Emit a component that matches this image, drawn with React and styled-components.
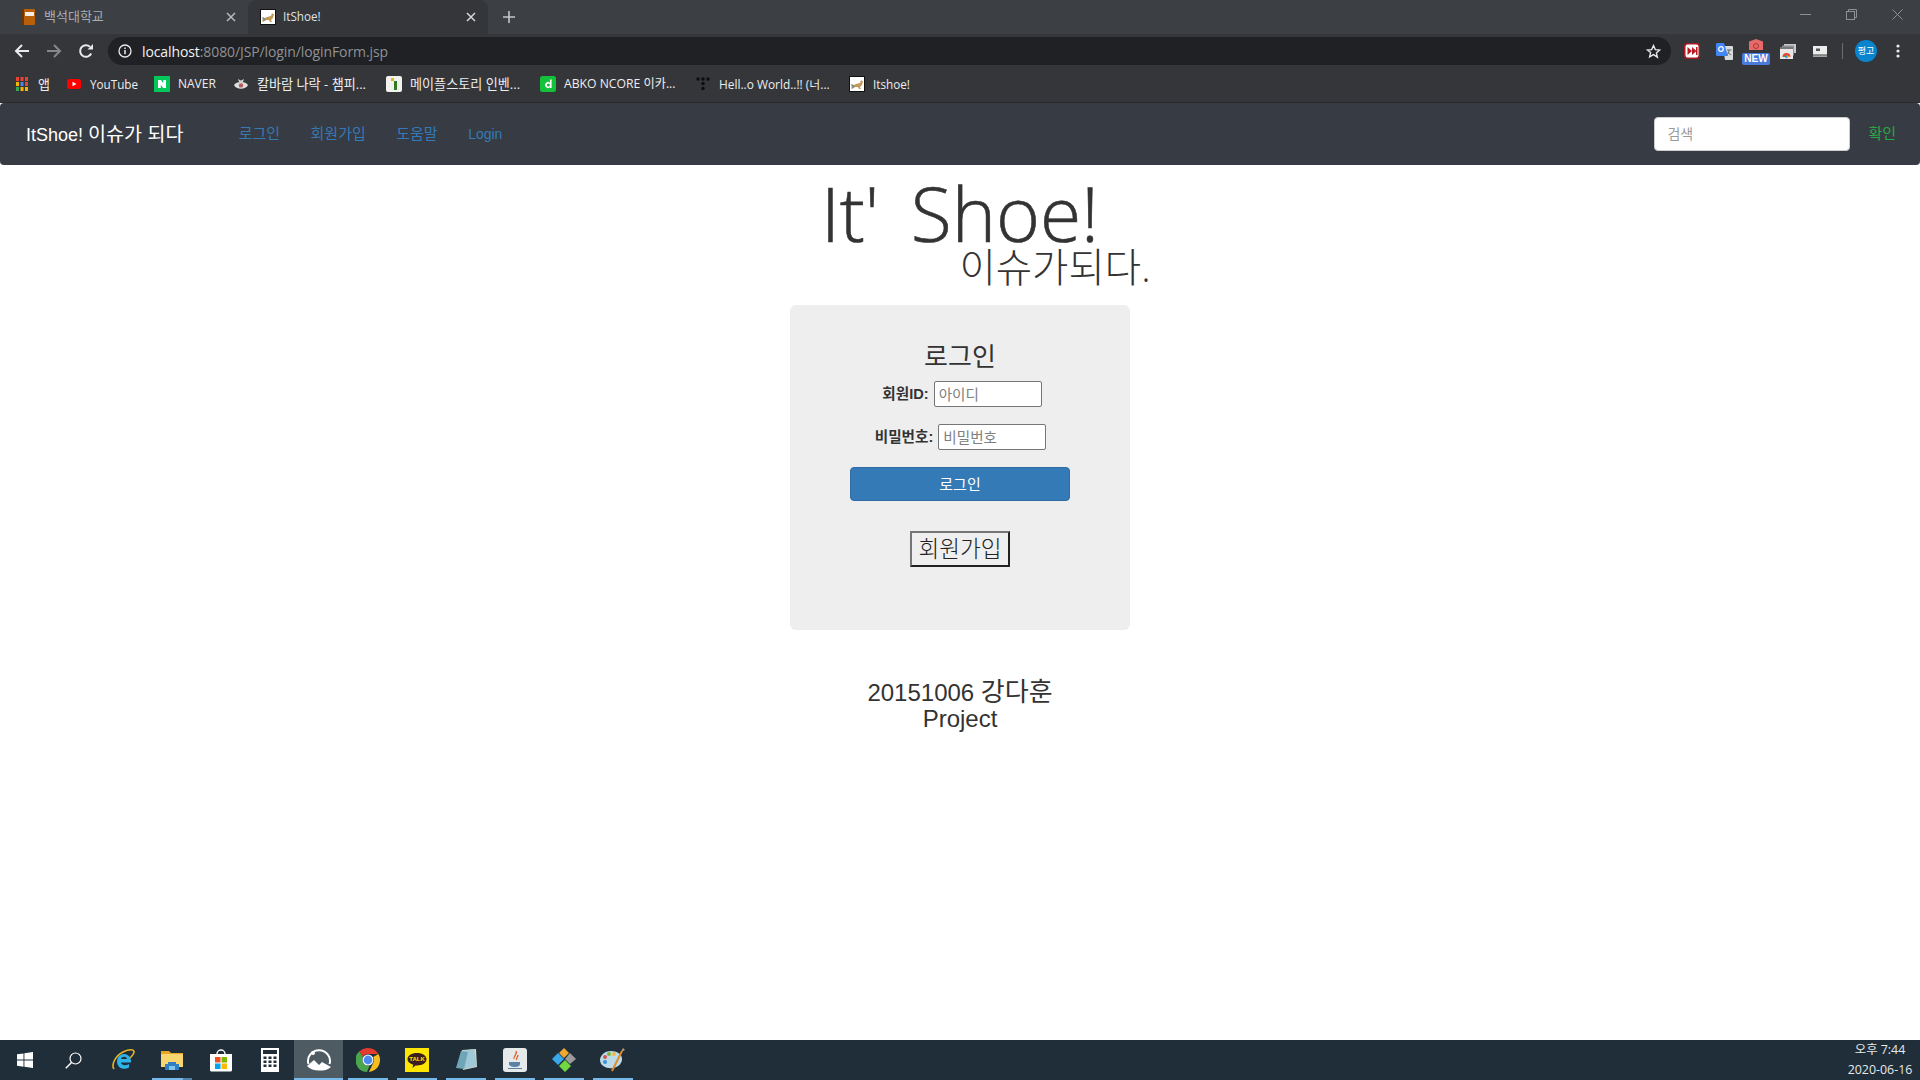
import React from "react";
import styled, { createGlobalStyle } from "styled-components";

const KR = '"Noto Sans CJK KR"';
const Global = createGlobalStyle`
  html, body { margin: 0; padding: 0; background: #fff; }
  body { font-family: "Liberation Sans", ${KR}, sans-serif; overflow: hidden; }
  * { box-sizing: border-box; }
`;

const Screen = styled.div`
  width: 1920px; height: 1080px; display: flex; flex-direction: column; overflow: hidden;
`;
const Chrome = styled.header`
  flex: none; height: 103px; display: flex; flex-direction: column;
  font-family: "Open Sans", ${KR}, sans-serif; color: #e8eaed;
`;
const TabStrip = styled.div`
  height: 34px; background: #3c4045; display: flex; padding-left: 8px; align-items: stretch;
`;
const Tab = styled.div`
  width: 240px; display: flex; align-items: center; padding: 0 12px; gap: 8px;
  border-radius: 8px 8px 0 0;
  background: ${p => (p.$active ? "#35363a" : "transparent")};
  color: ${p => (p.$active ? "#dfe1e5" : "#a9adb2")};
`;
const TabTitle = styled.span`
  flex: 1; white-space: nowrap; font-size: ${p => p.$size}px; line-height: 16px; padding-bottom: 2px; margin-left: ${p => p.$nudge || 0}px;
`;
const NewTab = styled.div`
  width: 42px; display: flex; align-items: center; justify-content: center;
`;
const WindowControls = styled.div`
  margin-left: auto; display: flex; align-items: center; padding-bottom: 6px;
`;
const WindowButton = styled.div`
  width: 46px; display: flex; justify-content: center;
`;
const Toolbar = styled.div`
  height: 34px; background: #35363a; display: flex; align-items: center; padding-left: 6px;
`;
const NavButton = styled.div`
  width: 32px; display: flex; justify-content: center; align-items: center;
`;
const UrlBar = styled.div`
  flex: 1; height: 28px; margin-left: 6px; background: #202124; border-radius: 14px;
  display: flex; align-items: center; padding: 0 10px; gap: 10px; font-size: 14px;
`;
const UrlText = styled.span`
  flex: 1; color: #8f9296; letter-spacing: -0.1px; line-height: 18px; padding-top: 1px;
`;
const UrlHost = styled.span`
  color: #f1f3f4;
`;
const Extensions = styled.div`
  width: 249px; display: flex; align-items: center; padding-left: 5px;
`;
const Extension = styled.div`
  width: 32px; height: 28px; display: flex; justify-content: center; align-items: center; position: relative;
`;
const NewBadge = styled.span`
  position: absolute; left: 2px; bottom: 0; width: 28px; height: 12px; border-radius: 2px;
  background: #4a7bdc; color: #fff; font: bold 10px/12px "Liberation Sans", sans-serif; text-align: center;
`;
const Separator = styled.div`
  width: 1px; height: 16px; background: #6a6c70; margin: 0 12px 0 6px;
`;
const Avatar = styled.div`
  width: 22px; height: 22px; border-radius: 50%; background: #0a84ce; color: #fff; font-size: 9px;
  line-height: 22px; text-align: center; font-family: ${KR}, sans-serif;
`;
const MenuDots = styled.div`
  width: 32px; display: flex; justify-content: center; margin-left: 5px;
`;
const Bookmarks = styled.div`
  height: 34px; background: #35363a; display: flex; align-items: center; padding: 0 0 3px 14px; color: #eceef0;
`;
const Bookmark = styled.div`
  width: ${p => p.$w}px; display: flex; align-items: center; gap: 8px; white-space: nowrap;
`;
const BookmarkLabel = styled.span`
  font-size: ${p => p.$size}px; line-height: 16px;
`;
const ChromeEdge = styled.div`
  height: 1px; background: #29292c;
`;

const Page = styled.main`
  flex: 1; background: #fff; display: flex; flex-direction: column; min-height: 0;
`;
const Navbar = styled.nav`
  flex: none; height: 62px; background: #373b43; border-radius: 4px; display: flex; align-items: center;
  padding: 0 24px 0 26px;
`;
const Brand = styled.a`
  color: #fff; font-size: 18px; line-height: 22px; margin-right: 55px; white-space: nowrap; font-family: "Liberation Sans", ${KR}, sans-serif;
`;
const BrandKorean = styled.span`
  font-size: 19.6px;
`;
const NavLinks = styled.div`
  display: flex; gap: 30.5px; flex: 1; align-items: baseline;
`;
const NavLink = styled.a`
  color: #337ab7; font-size: ${p => p.$size || 15}px; line-height: 20px;
`;
const SearchInput = styled.input`
  width: 196px; height: 34px; border: 1px solid #ccc; border-radius: 4px; padding: 6px 12px; font-size: 14px;
  font-family: "Liberation Sans", ${KR}, sans-serif;
  background: #fff; &::placeholder { color: #999; opacity: 1; }
`;
const Confirm = styled.span`
  color: #28a745; margin-left: 18px; font-size: 15px; line-height: 20px;
`;
const Title = styled.h1`
  margin: 12px 0 0; font-size: 75px; line-height: 72px; font-weight: 300; color: #333; text-align: center; word-spacing: 12px;
  font-family: "Open Sans", ${KR}, sans-serif; -webkit-text-stroke: 0.6px #333;
`;
const Subtitle = styled.h2`
  margin: 0; padding-left: 190px; font-size: 39.5px; line-height: 36px; font-weight: 300; color: #333; text-align: center;
  font-family: "Open Sans", ${KR}, sans-serif;
`;
const Panel = styled.section`
  width: 340px; height: 325px; margin: 20px auto 0; background: #eee; border-radius: 6px;
  padding-top: 39px; display: flex; flex-direction: column; align-items: center;
`;
const PanelTitle = styled.h3`
  margin: 0 0 11px; font-size: 26px; line-height: 26px; font-weight: 400; color: #333;
`;
const FieldRow = styled.div`
  display: flex; align-items: center; gap: 5px; height: 26px; margin-bottom: 17px; margin-left: ${p => p.$shift}px;
`;
const FieldLabel = styled.label`
  font-size: 14.6px; font-weight: 700; color: #333; line-height: 20px; padding-left: 1px;
`;
const FieldInput = styled.input`
  width: 108px; height: 26px; border: 1px solid #767676; border-radius: 2px; padding: 1px 4px 3px; background: #fff;
  font-size: 14.6px; font-family: ${KR}, sans-serif; &::placeholder { color: #808080; opacity: 1; }
`;
const SubmitButton = styled.button`
  width: 220px; height: 34px; background: #337ab7; border: 1px solid #2e6da4; border-radius: 4px; color: #fff;
  font-size: 15px; font-family: inherit; padding: 0 0 2px;
`;
const SignupButton = styled.button`
  width: 100px; height: 36px; margin-top: 30px; background: #efefef; border: 2px solid; border-color: #767676 #222 #222 #767676;
  font-size: 22.6px; font-weight: 300; line-height: 28px; color: #222; font-family: ${KR}, sans-serif; padding: 0 0 3px;
`;
const Credits = styled.div`
  margin-top: 49px; text-align: center; font-size: 24px; line-height: 26px; color: #333;
`;
const CreditName = styled.span`
  font-size: 26px;
`;

const Taskbar = styled.footer`
  flex: none; height: 40px; background: #1f2e38; display: flex; align-items: stretch; position: relative;
`;
const TaskCell = styled.div`
  width: 49px; display: flex; align-items: center; justify-content: center; position: relative;
  background: ${p => (p.$active ? "#4e5b63" : "transparent")};
  &::after {
    content: ""; position: absolute; bottom: 0; height: 2px; background: #76b9ed;
    left: ${p => (p.$active ? "0" : "4.5px")}; right: ${p => (p.$active ? "0" : "4.5px")};
    display: ${p => (p.$running || p.$active ? "block" : "none")};
  }
  &::before {
    content: ""; position: absolute; bottom: 0; height: 2px; width: 9px; right: 4.5px; z-index: 1; background: #4f83ac;
    display: ${p => (p.$stacked ? "block" : "none")};
  }
`;
const Clock = styled.div`
  margin-left: auto; width: 80px; margin-right: 0; text-align: center; color: #e6e9eb; font-size: 12.4px; line-height: 19.5px;
  font-family: "Open Sans", ${KR}, sans-serif;
`;

const Cat = () => (
  <svg width="16" height="16" viewBox="0 0 16 16">
    <rect x=".5" y=".5" width="15" height="15" fill="#fff" stroke="#111" />
    <path d="M2 12l3-3 2-1 4-1 1-3 1 1 1 0-1 4-2 2 1 2-2 0-1-2-3 0-3 2z" fill="#c49a56" />
    <path d="M2 8l3 1 1 2-3 1z" fill="#8a8f80" />
  </svg>
);
const BookIcon = () => (
  <svg width="16" height="16" viewBox="0 0 16 16">
    <rect x="1" y="0" width="14" height="16" rx="1" fill="#b85f0a" />
    <rect x="1" y="0" width="3" height="16" fill="#6d3606" />
    <rect x="5" y="3" width="9" height="4" fill="#f4efe4" />
  </svg>
);
const Close = ({ c = "#b8babd", s = 10 }) => (
  <svg width={s} height={s} viewBox="0 0 10 10"><path d="M1 1l8 8M9 1l-8 8" stroke={c} strokeWidth="1.5" /></svg>
);
const Arrow = ({ c, flip }) => (
  <svg width="16" height="16" viewBox="0 0 16 16" style={flip ? { transform: "scaleX(-1)" } : undefined}>
    <path d="M15 8H2M8 2L2 8l6 6" fill="none" stroke={c} strokeWidth="2" />
  </svg>
);
const Reload = () => (
  <svg width="16" height="16" viewBox="0 0 16 16">
    <path d="M13.2 10.5A5.8 5.8 0 1 1 12 3.9" fill="none" stroke="#e8eaed" strokeWidth="2" />
    <path d="M9.5 6.5H15V1z" fill="#e8eaed" />
  </svg>
);
const Info = () => (
  <svg width="14" height="14" viewBox="0 0 14 14">
    <circle cx="7" cy="7" r="6" fill="none" stroke="#e8eaed" strokeWidth="1.3" />
    <path d="M7 6v4.2M7 3.5v1.5" stroke="#e8eaed" strokeWidth="1.5" />
  </svg>
);
const Star = () => (
  <svg width="15" height="15" viewBox="0 0 24 24">
    <path d="M12 2.5l2.9 6.4 7 .7-5.3 4.6 1.6 6.900L12 17l-6.200 3.600 1.600-6.900L2.100 9.600l7-.7z" fill="none" stroke="#e8eaed" strokeWidth="2.2" />
  </svg>
);
const Apps = () => (
  <svg width="16" height="16" viewBox="0 0 16 16">
    {[["#e94335", "#e94335", "#e94335"], ["#f4b400", "#4285f4", "#e94335"], ["#34a853", "#f4b400", "#f4b400"]].map((row, y) =>
      row.map((c, x) => <rect key={`${x}${y}`} x={2 + x * 4.5} y={1 + y * 5} width="3" height="4" fill={c} />)
    )}
  </svg>
);
const YouTube = () => (
  <svg width="16" height="16" viewBox="0 0 16 16">
    <rect x="1" y="3" width="14" height="10" rx="2.5" fill="#f00" />
    <path d="M6.500 5.700v4.600L10.400 8z" fill="#fff" />
  </svg>
);
const Naver = () => (
  <svg width="16" height="16" viewBox="0 0 16 16">
    <rect width="16" height="16" fill="#03c75a" />
    <path d="M4 4h3l2.200 3.300V4H12v8H9L6.800 8.700V12H4z" fill="#fff" />
  </svg>
);
const Eye = () => (
  <svg width="16" height="16" viewBox="0 0 16 16">
    <path d="M1 9c2-4 12-4 14 0-2 5-12 5-14 0z" fill="#dfdfdf" />
    <path d="M5 3l1 3h4l1-3-3 1.500z" fill="#cfcfcf" />
    <circle cx="8" cy="9.400" r="2.200" fill="#b85a5a" />
  </svg>
);
const Maple = () => (
  <svg width="16" height="16" viewBox="0 0 16 16">
    <rect width="16" height="16" rx="2" fill="#f2f2ee" />
    <rect x="5" y="2" width="3" height="3" fill="#e8b420" />
    <rect x="8" y="5" width="3" height="9" fill="#2f7d20" />
  </svg>
);
const DIcon = () => (
  <svg width="16" height="16" viewBox="0 0 16 16">
    <rect width="16" height="16" rx="2.500" fill="#13c13a" />
    <path d="M10 3.500h1.600V12H10v-.7a3 3 0 1 1 0-4.600zM8.400 7.600a1.500 1.500 0 1 0 0 3 1.500 1.500 0 0 0 0-3z" fill="#fff" fillRule="evenodd" />
  </svg>
);
const TDots = () => (
  <svg width="16" height="16" viewBox="0 0 16 16" fill="#0d0d0d">
    {[[3, 3], [8, 3], [13, 3], [8, 7.5], [8, 12.5]].map(([x, y]) => <circle key={`${x}${y}`} cx={x} cy={y} r="1.7" />)}
  </svg>
);
const RedExt = () => (
  <svg width="16" height="16" viewBox="0 0 16 16">
    <rect x=".7" y=".7" width="14.600" height="14.600" rx="3" fill="#fff" stroke="#a81b22" strokeWidth="1.600" />
    <path d="M3.500 4v8L8 8zM8 4v8l4.500-4z" fill="#b71c24" />
    <rect x="12" y="4" width="1.500" height="8" fill="#b71c24" />
  </svg>
);
const Translate = () => (
  <svg width="17" height="17" viewBox="0 0 17 17">
    <path d="M7 3h9a1 1 0 0 1 1 1v12a1 1 0 0 1-1 1H9z" fill="#d8dadb" />
    <path d="M1 0h7l4 13H1a1 1 0 0 1-1-1V1a1 1 0 0 1 1-1z" fill="#4285f4" />
    <circle cx="5" cy="6" r="2.300" fill="none" stroke="#fff" strokeWidth="1.200" />
    <path d="M11 7h4.500M13 7c0 3-1 4-2.500 5M11.700 9c1 1.500 2 2.300 3.500 2.700" fill="none" stroke="#5f6368" strokeWidth="1" />
  </svg>
);
const Shield = () => (
  <svg width="16" height="18" viewBox="0 0 16 18" style={{ marginTop: -6 }}>
    <path d="M8 0l7 2.500V11H1V2.500z" fill="#e66a6a" />
    <circle cx="8" cy="7" r="2.500" fill="none" stroke="#b03535" strokeWidth="1" />
  </svg>
);
const StackChrome = () => (
  <svg width="16" height="15" viewBox="0 0 16 15">
    <rect x="4" y="0" width="12" height="9" fill="#c8c9cb" />
    <rect x="2" y="1.500" width="12" height="10" fill="#8f9296" />
    <rect x="0" y="3" width="13" height="12" fill="#e8e8e8" />
    <rect x="0" y="3" width="13" height="2" fill="#777" />
    <path d="M2.500 13a4 4 0 0 1 4-4 4 4 0 0 1 4 4z" fill="#e94335" />
    <path d="M6.500 11l4 2h-4z" fill="#fbbc05" />
    <path d="M2.500 13l4-2v2z" fill="#34a853" />
    <circle cx="6.500" cy="13" r="1.200" fill="#4285f4" />
  </svg>
);
const ScreenExt = () => (
  <svg width="14" height="11" viewBox="0 0 14 11">
    <rect width="14" height="8.500" fill="#eceded" />
    <rect x="3" y="2.500" width="4" height="2.500" fill="#555" />
    <rect y="9.300" width="14" height="1.700" fill="#a4a6a8" />
  </svg>
);
const Dots = () => (
  <svg width="4" height="14" viewBox="0 0 4 14" fill="#e8eaed">
    <circle cx="2" cy="2" r="1.600" /><circle cx="2" cy="7" r="1.600" /><circle cx="2" cy="12" r="1.600" />
  </svg>
);
const WinMin = () => <svg width="11" height="11" viewBox="0 0 11 11"><path d="M0 5.500h11" stroke="#8d9094" /></svg>;
const WinRestore = () => (
  <svg width="11" height="11" viewBox="0 0 11 11" fill="none" stroke="#8d9094">
    <rect x=".5" y="2.500" width="8" height="8" /><path d="M2.500 2.500v-2h8v8h-2" />
  </svg>
);
const WinClose = () => <svg width="11" height="11" viewBox="0 0 11 11"><path d="M.5.5l10 10M10.500.5l-10 10" stroke="#8d9094" /></svg>;
const Plus = () => <svg width="12" height="12" viewBox="0 0 12 12"><path d="M6 0v12M0 6h12" stroke="#c4c6c9" strokeWidth="1.600" /></svg>;

const WinLogo = () => (
  <svg width="16" height="16" viewBox="0 0 16 16" fill="#fff">
    <path d="M0 2.300L6.500 1.400v6.200H0zM7.400 1.300L16 0v7.600H7.400zM0 8.500h6.500v6.200L0 13.700zM7.400 8.500H16V16l-8.600-1.200z" />
  </svg>
);
const SearchGlass = () => (
  <svg width="17" height="17" viewBox="0 0 17 17" fill="none" stroke="#fff">
    <circle cx="10.500" cy="6.500" r="5.500" strokeWidth="1.200" /><path d="M6.500 10.500L.8 16.200" strokeWidth="1.500" />
  </svg>
);
const IE = () => (
  <svg width="24" height="24" viewBox="0 0 24 24">
    <path d="M3 21C0 17 4 8 12 4c6-3 11-3 11 0 0 2-2 4-4 6" fill="none" stroke="#e6b422" strokeWidth="1.600" />
    <path d="M6 13a7 7 0 0 1 14 0v1.500H10c.3 3 5 3.500 8 1.500v3.500c-5 3-12 1-12-6.500zM10 11h6c-.3-3-5.500-3-6 0z" fill="#2fb4e9" fillRule="evenodd" />
  </svg>
);
const Folder = () => (
  <svg width="22" height="20" viewBox="0 0 22 20">
    <path d="M0 1h8l2 2h12v5H0z" fill="#e4a826" />
    <rect y="4" width="22" height="13" fill="#f7d66f" />
    <path d="M4 20v-6h3v-2h8v2h3v6h-4v-4H8v4z" fill="#2f7fc4" />
    <rect x="8" y="16" width="6" height="4" fill="#7fc4ee" />
  </svg>
);
const Store = () => (
  <svg width="24" height="24" viewBox="0 0 24 24">
    <path d="M8 6a4 4 0 0 1 8 0" fill="none" stroke="#fff" strokeWidth="1.400" />
    <path d="M1 6h22v16a1.500 1.500 0 0 1-1.500 1.500h-19A1.500 1.500 0 0 1 1 22z" fill="#fff" />
    <rect x="6" y="9" width="5.500" height="5.500" fill="#f25022" />
    <rect x="12.500" y="9" width="5.500" height="5.500" fill="#7fba00" />
    <rect x="6" y="15.500" width="5.500" height="5.500" fill="#00a4ef" />
    <rect x="12.500" y="15.500" width="5.500" height="5.500" fill="#ffb900" />
  </svg>
);
const Calc = () => (
  <svg width="18" height="24" viewBox="0 0 18 24">
    <rect width="18" height="24" fill="#fff" />
    <rect x="2" y="2" width="14" height="4" fill="#1f2e38" />
    {[8.5, 12.5, 16.5].map(y => [2.5, 7.5, 12.5].map(x => <rect key={`${x}${y}`} x={x} y={y} width="3" height="2.500" fill="#1f2e38" />))}
  </svg>
);
const Photos = () => (
  <svg width="26" height="24" viewBox="0 0 26 24" fill="none" stroke="#fff" strokeWidth="2">
    <path d="M2.500 16a11 10.500 0 1 1 21 0" />
    <path d="M1 18l7-6 5 5 3-3 9 5c-3 3-7 3.500-12 3.500S4 21 1 18z" fill="#fff" stroke="none" />
    <circle cx="7" cy="5" r="2" fill="#fff" stroke="none" />
  </svg>
);
const ChromeLogo = () => (
  <svg width="24" height="24" viewBox="0 0 24 24">
    <path d="M12 0a12 12 0 0 1 10.400 6H12a6 6 0 0 0-5.200 3L3.400 3.200A12 12 0 0 1 12 0z" fill="#e33b2e" />
    <path d="M22.400 6a12 12 0 0 1-9.500 18L17.200 15a6 6 0 0 0 0-6z" fill="#f5bd1f" />
    <path d="M3.400 3.200L7 9.500a6 6 0 0 0 6.500 8.300L11 24A12 12 0 0 1 3.400 3.200z" fill="#4aa54d" />
    <circle cx="12" cy="12" r="5.500" fill="#fff" />
    <circle cx="12" cy="12" r="4.400" fill="#4d8bf0" />
  </svg>
);
const Kakao = () => (
  <svg width="24" height="24" viewBox="0 0 24 24">
    <rect width="24" height="24" fill="#ffe600" />
    <path d="M12 5c5.500 0 9.500 2.700 9.500 6.300S17.500 17.500 12 17.500h-1.500L7.500 20l.7-3.200C4.800 15.600 2.500 13.700 2.500 11.300 2.500 7.700 6.500 5 12 5z" fill="#3c1e1e" />
    <text x="12" y="13.300" textAnchor="middle" fontSize="6" fontWeight="700" fill="#ffe600" fontFamily="Liberation Sans">TALK</text>
  </svg>
);
const Notepad = () => (
  <svg width="24" height="24" viewBox="0 0 24 24">
    <path d="M8 2l14-1 1 18-14 3z" fill="#d7d5c3" />
    <path d="M7 3l13-2 3 17-13 3z" fill="#9fc9d6" />
    <path d="M2 20l5-17 7 1-4 17z" fill="#6ea6b8" />
  </svg>
);
const JavaIcon = () => (
  <svg width="24" height="24" viewBox="0 0 24 24">
    <rect width="24" height="24" rx="3" fill="#e6e9ea" />
    <path d="M13 3c2 3-3 5-2 8M15 7c0 2-2 3-1.500 5" fill="none" stroke="#d9652a" strokeWidth="1.300" />
    <path d="M6 14h11v2c0 2-2 3-5 3s-6-1-6-3zM5 20h14v1H5z" fill="#5c82a3" />
  </svg>
);
const Diamonds = () => (
  <svg width="24" height="24" viewBox="0 0 24 24">
    <path d="M12 0l5 5-5 5-5-5z" fill="#f0a830" />
    <path d="M18 5l6 6-6 5-5-5z" fill="#9b9b9b" />
    <path d="M6 5l6 6-6 6-6-6z" fill="#3aa7ea" />
    <path d="M13 12l6 6-6 6-6-6z" fill="#70d940" />
  </svg>
);
const Palette = () => (
  <svg width="26" height="26" viewBox="0 0 26 26">
    <path d="M11 4C4 4 0 9 0 13c0 6 7 9 13 8 6-1 9-5 9-9 0-5-5-8-11-8z" fill="#bcdbe8" />
    <circle cx="5" cy="10" r="2" fill="#d9534f" /><circle cx="9" cy="7" r="2" fill="#7cb342" />
    <circle cx="14" cy="7" r="2" fill="#f4b942" /><circle cx="5" cy="15" r="2" fill="#3b8fd9" />
    <path d="M12 24L22 4" stroke="#e08a2e" strokeWidth="2" /><path d="M21 5l2-4 2 2z" fill="#c8a070" />
  </svg>
);

const bookmarks = [
  [<Apps key="a" />, "앱", 52, 13],
  [<YouTube key="a" />, "YouTube", 88, 11.7],
  [<Naver key="a" />, "NAVER", 79, 12],
  [<Eye key="a" />, "칼바람 나락 - 챔피...", 153, 13.1],
  [<Maple key="a" />, "메이플스토리 인벤...", 154, 13.1],
  [<DIcon key="a" />, "ABKO NCORE 이카...", 155, 12.2],
  [<TDots key="a" />, "Hell..o World..!! (너...", 154, 11.9],
  [<Cat key="a" />, "Itshoe!", 80, 11.7],
];
const tasks = [
  { icon: <WinLogo /> }, { icon: <SearchGlass /> }, { icon: <IE /> }, { icon: <Folder />, running: true, stacked: true }, { icon: <Store /> }, { icon: <Calc /> },
  { icon: <Photos />, active: true }, { icon: <ChromeLogo />, running: true }, { icon: <Kakao />, running: true }, { icon: <Notepad />, running: true },
  { icon: <JavaIcon />, running: true }, { icon: <Diamonds />, running: true }, { icon: <Palette />, running: true },
];

export default function App() {
  return (
    <Screen>
      <Global />
      <Chrome>
        <TabStrip>
          <Tab><BookIcon /><TabTitle $size={13}>백석대학교</TabTitle><Close /></Tab>
          <Tab $active><Cat /><TabTitle $size={11.7} $nudge={-1}>ItShoe!</TabTitle><Close c="#d5d7da" /></Tab>
          <NewTab><Plus /></NewTab>
          <WindowControls>
            <WindowButton><WinMin /></WindowButton>
            <WindowButton><WinRestore /></WindowButton>
            <WindowButton><WinClose /></WindowButton>
          </WindowControls>
        </TabStrip>
        <Toolbar>
          <NavButton><Arrow c="#e8eaed" /></NavButton>
          <NavButton><Arrow c="#85878a" flip /></NavButton>
          <NavButton><Reload /></NavButton>
          <UrlBar>
            <Info />
            <UrlText><UrlHost>localhost</UrlHost>:8080/JSP/login/loginForm.jsp</UrlText>
            <Star />
          </UrlBar>
          <Extensions>
            <Extension><RedExt /></Extension>
            <Extension><Translate /></Extension>
            <Extension><Shield /><NewBadge>NEW</NewBadge></Extension>
            <Extension><StackChrome /></Extension>
            <Extension><ScreenExt /></Extension>
            <Separator />
            <Avatar>평고</Avatar>
            <MenuDots><Dots /></MenuDots>
          </Extensions>
        </Toolbar>
        <Bookmarks>
          {bookmarks.map(([icon, label, w, size]) => (
            <Bookmark key={label} $w={w}>{icon}<BookmarkLabel $size={size}>{label}</BookmarkLabel></Bookmark>
          ))}
        </Bookmarks>
        <ChromeEdge />
      </Chrome>
      <Page>
        <Navbar>
          <Brand>ItShoe! <BrandKorean>이슈가 되다</BrandKorean></Brand>
          <NavLinks>
            <NavLink>로그인</NavLink>
            <NavLink>회원가입</NavLink>
            <NavLink>도움말</NavLink>
            <NavLink $size={14}>Login</NavLink>
          </NavLinks>
          <SearchInput placeholder="검색" />
          <Confirm>확인</Confirm>
        </Navbar>
        <Title>It' Shoe!</Title>
        <Subtitle>이슈가되다.</Subtitle>
        <Panel>
          <PanelTitle>로그인</PanelTitle>
          <FieldRow $shift={3}><FieldLabel>회원ID:</FieldLabel><FieldInput placeholder="아이디" /></FieldRow>
          <FieldRow $shift={0}><FieldLabel>비밀번호:</FieldLabel><FieldInput placeholder="비밀번호" /></FieldRow>
          <SubmitButton>로그인</SubmitButton>
          <SignupButton>회원가입</SignupButton>
        </Panel>
        <Credits>20151006 <CreditName>강다훈</CreditName><br />Project</Credits>
      </Page>
      <Taskbar>
        {tasks.map(({ icon, running, active, stacked }, i) => (
          <TaskCell key={i} $running={running} $active={active} $stacked={stacked}>{icon}</TaskCell>
        ))}
        <Clock>오후 7:44<br />2020-06-16</Clock>
      </Taskbar>
    </Screen>
  );
}
